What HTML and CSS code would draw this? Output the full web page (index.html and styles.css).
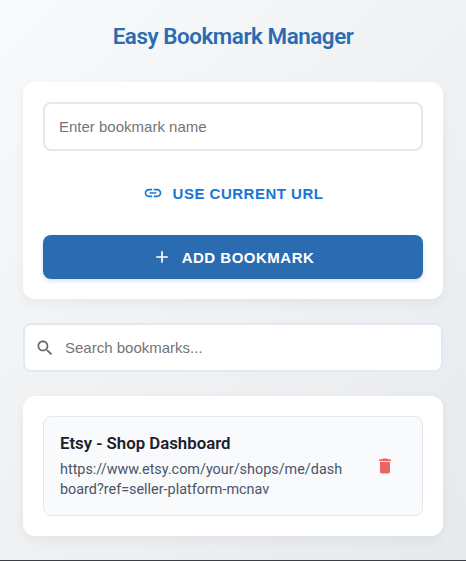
FILE: index.html
```html
<!DOCTYPE html>
<html lang="en">
<head>
<meta charset="utf-8">
<title>Easy Bookmark Manager</title>
<link rel="stylesheet" href="styles.css">
</head>
<body>
<main class="popup">
  <h1 class="title">Easy Bookmark Manager</h1>
  <section class="card form">
    <input class="field" type="text" placeholder="Enter bookmark name">
    <button class="btn btn-text"><svg class="icon" viewBox="0 0 24 24"><path d="M3.9 12c0-1.71 1.39-3.1 3.1-3.1h4V7H7c-2.76 0-5 2.24-5 5s2.24 5 5 5h4v-1.9H7c-1.71 0-3.1-1.39-3.1-3.1zM8 13h8v-2H8v2zm9-6h-4v1.9h4c1.71 0 3.1 1.39 3.1 3.1s-1.39 3.1-3.1 3.1h-4V17h4c2.76 0 5-2.24 5-5s-2.24-5-5-5z"/></svg><span>USE CURRENT URL</span></button>
    <button class="btn btn-primary"><svg class="icon" viewBox="0 0 24 24"><path d="M19 13h-6v6h-2v-6H5v-2h6V5h2v6h6v2z"/></svg><span>ADD BOOKMARK</span></button>
  </section>
  <label class="search">
    <svg class="icon" viewBox="0 0 24 24"><path d="M15.5 14h-.79l-.28-.27C15.41 12.59 16 11.11 16 9.5 16 5.91 13.09 3 9.5 3S3 5.91 3 9.5 5.91 16 9.5 16c1.61 0 3.09-.59 4.23-1.57l.27.28v.79l5 4.99L20.49 19l-4.99-5zm-6 0C7.01 14 5 11.99 5 9.5S7.01 5 9.5 5 14 7.01 14 9.5 11.99 14 9.5 14z"/></svg>
    <input class="search-input" type="text" placeholder="Search bookmarks...">
  </label>
  <section class="card">
    <article class="bookmark">
      <div class="info">
        <h2 class="name">Etsy - Shop Dashboard</h2>
        <p class="url">https://www.etsy.com/your/shops/me/dashboard?ref=seller-platform-mcnav</p>
      </div>
      <button class="delete" aria-label="Delete"><svg class="icon" viewBox="0 0 24 24"><path d="M6 19c0 1.1.9 2 2 2h8c1.1 0 2-.9 2-2V7H6v12zM19 4h-3.5l-1-1h-5l-1 1H5v2h14V4z"/></svg></button>
    </article>
  </section>
</main>
</body>
</html>
```
FILE: styles.css
```css
* { box-sizing: border-box; }

body {
  margin: 0;
  height: 561px;
  overflow: hidden;
  font-family: Roboto, sans-serif;
  background: linear-gradient(135deg, #f8fafc 0%, #f0f1f3 50%, #e6eaed 100%);
  border-bottom: 1px solid #3c3f43;
}

.popup {
  display: flex;
  flex-direction: column;
  gap: 24px;
  padding: 22px 23px 24px;
}

.title {
  margin: 0 0 8px;
  font-size: 22.4px;
  line-height: 28px;
  font-weight: 600;
  text-align: center;
  letter-spacing: -0.45px;
  color: #2b6cb0;
}

.card {
  padding: 20px;
  border-radius: 12px;
  background: #fff;
  box-shadow: 0 4px 12px rgba(0, 0, 0, 0.05);
}

.form {
  display: flex;
  flex-direction: column;
  gap: 20px;
}

.field,
.search {
  width: 100%;
  height: 49px;
  border: 2px solid #e2e8f0;
  border-radius: 8px;
  background: #fff;
}

.field,
.search-input {
  font: 15px "Liberation Sans", Arial, sans-serif;
  color: #2d3748;
}

.field { padding: 0 14px; }

.field::placeholder,
.search-input::placeholder { color: #757575; }

.icon {
  display: block;
  flex: none;
  width: 20px;
  height: 20px;
  fill: currentColor;
}

.btn {
  display: flex;
  align-items: center;
  justify-content: center;
  gap: 10px;
  height: 44px;
  padding: 0;
  border: 0;
  border-radius: 8px;
  font: bold 15px "Liberation Sans", Arial, sans-serif;
  letter-spacing: 0.5px;
}

.btn-text {
  background: transparent;
  color: #1976d2;
}

.btn-primary {
  background: #2b6cb0;
  color: #fff;
  box-shadow: 0 2px 4px rgba(43, 108, 176, 0.2);
}

.search {
  display: flex;
  align-items: center;
  gap: 10px;
  padding: 0 10px;
  color: #666;
}

.search-input {
  flex: 1;
  min-width: 0;
  padding: 0;
  border: 0;
  outline: 0;
  background: transparent;
}

.bookmark {
  display: flex;
  align-items: center;
  height: 100px;
  padding: 0 17px 0 16px;
  border: 1px solid #e2e8f0;
  border-radius: 8px;
  background: #f8fafc;
}

.info {
  flex: 1;
  min-width: 0;
  margin-right: 20px;
}

.name {
  margin: 0 0 7px;
  font-size: 16.8px;
  line-height: 20px;
  font-weight: 600;
  color: #1a202c;
}

.url {
  margin: 0;
  font-size: 14.4px;
  line-height: 20px;
  word-break: break-all;
  color: #4a5568;
}

.delete {
  padding: 10px;
  border: 0;
  background: transparent;
  color: #eb6565;
}
```
